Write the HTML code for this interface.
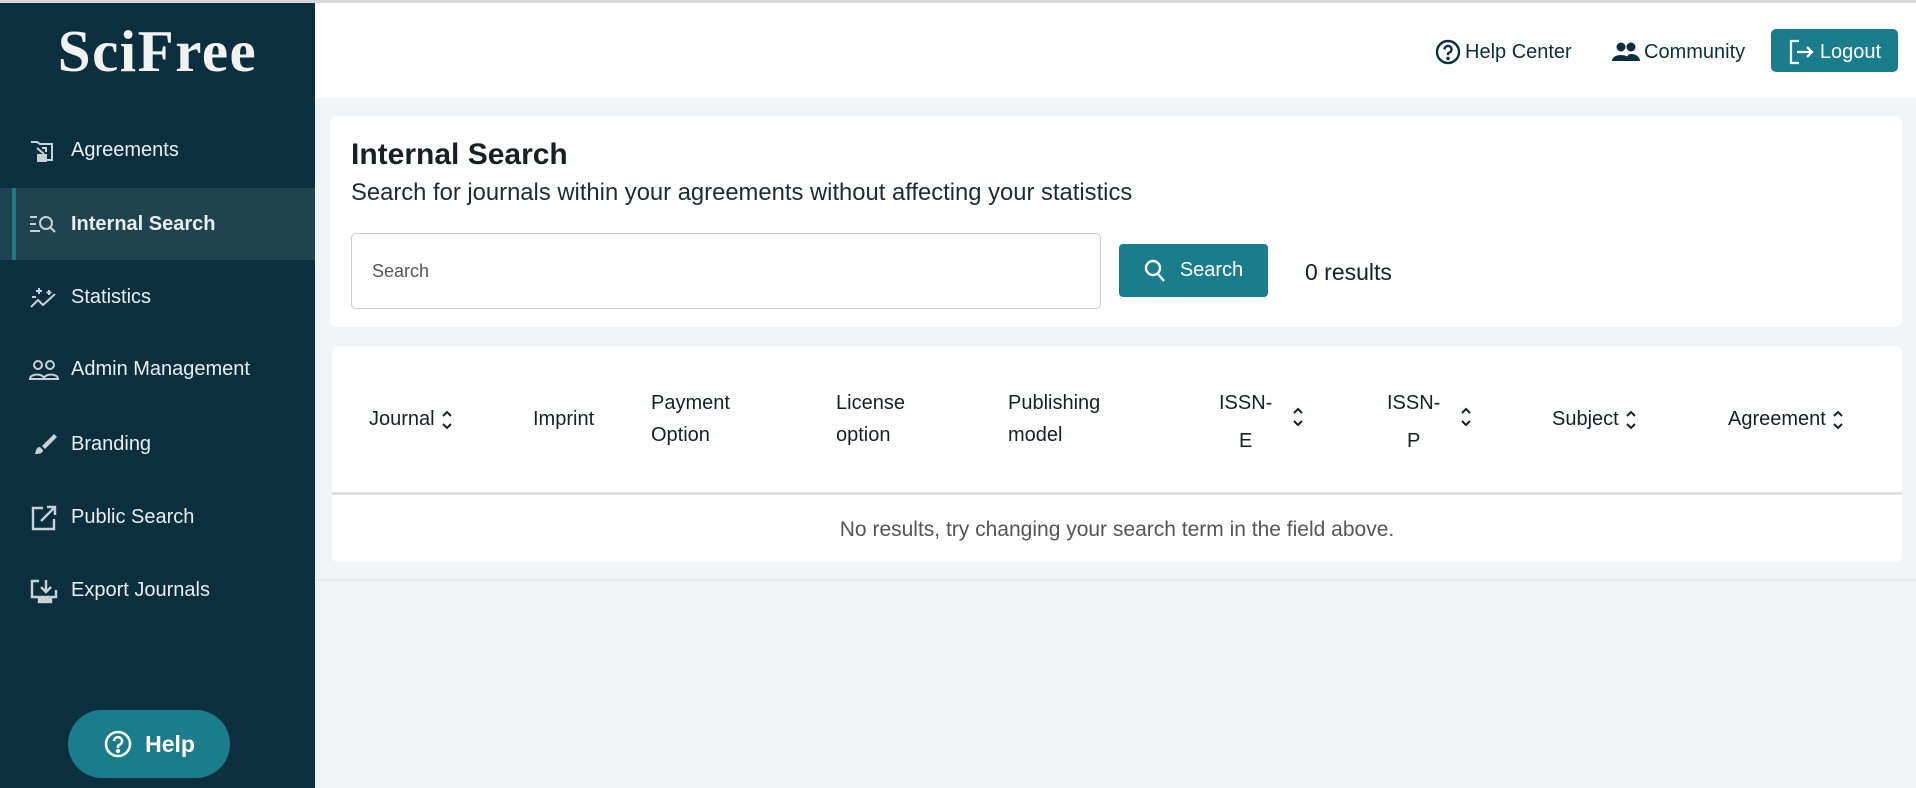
<!DOCTYPE html>
<html><head><meta charset="utf-8"><style>
*{margin:0;padding:0;box-sizing:border-box}
body{width:1916px;height:788px;overflow:hidden;background:#f1f4f7;font-family:"Liberation Sans",Arial,sans-serif;position:relative;color:#1a1f24}
.topline{position:absolute;left:0;top:0;width:1916px;height:3px;background:#d6d6d6;z-index:5}
.side{position:absolute;left:0;top:0;width:315px;height:788px;background:#0b2f3e}
.logo{position:absolute;left:0;width:315px;top:17px;text-align:center;font-family:"Liberation Serif",serif;font-weight:bold;font-size:59px;color:#f2f2f2;letter-spacing:1.5px}
.nav{position:absolute;left:0;width:315px;height:61px;display:flex;align-items:center;color:#e9eef0;font-size:20px}
.nav svg{position:absolute;left:29px;width:30px;height:26px}
.nav span{position:absolute;left:71px}
.active{background:#1f4350}
.active:before{content:"";position:absolute;left:12px;top:0;width:4px;height:100%;background:#1b7d8c}
.active span{font-weight:bold}
.help{position:absolute;left:68px;top:710px;width:162px;height:68px;border-radius:34px;background:#1b7d8c;color:#fff;font-weight:bold;font-size:23px;display:flex;align-items:center;justify-content:center;gap:12px}
.header{position:absolute;left:315px;top:0;width:1601px;height:98px;background:#fff}
.hl{position:absolute;top:37px;height:28px;font-size:20px;color:#0b2f3e;display:flex;align-items:center;gap:4px}
.logout{position:absolute;top:29px;width:127px;height:43px;background:#1b7d8c;border-radius:5px;color:#fff;font-size:20px;display:flex;align-items:center;justify-content:center;gap:6px;padding-top:3px}
.card{position:absolute;background:#fff;border-radius:6px}
h1{position:absolute;left:21px;top:22px;font-size:30px;font-weight:bold;color:#1a1f24}
.sub{position:absolute;left:21px;top:63px;font-size:23.8px;color:#1f2b33}
.inp{position:absolute;left:21px;top:117px;width:750px;height:76px;border:1px solid #c9cdd1;border-radius:5px;font-size:18px;color:#555;padding-left:20px;line-height:74px}
.sbtn{position:absolute;left:789px;top:128px;width:149px;height:53px;background:#1b7d8c;border-radius:4px;color:#fff;font-size:20px;display:flex;align-items:center;justify-content:center;gap:14px}
.res{position:absolute;left:975px;top:143px;font-size:23px;color:#1a1f24}
.th{position:absolute;font-size:20px;color:#1a1f24;line-height:32px}
.ch{display:inline-block;vertical-align:middle;margin-left:6px}
</style></head><body>
<div class="topline"></div>
<div class="side">
<div class="logo">SciFree</div>
<div class="nav" style="top:120px"><svg viewBox="0 0 30 26" fill="none" stroke="#c9d1d4" stroke-width="2"><path d="M2 4h6l3 2h12v16H10"/><path d="M8 10l7 6M13 10h4v4"/><rect x="9" y="17" width="8" height="6" fill="#c9d1d4"/></svg><span>Agreements</span></div>
<div class="nav active" style="top:188px;height:72px"><svg viewBox="0 0 30 26" fill="none" stroke="#c9d1d4" stroke-width="2"><path d="M1 6h7M1 13h6M1 20h10"/><circle cx="17" cy="12" r="6"/><path d="M21 16l5 5"/></svg><span>Internal Search</span></div>
<div class="nav" style="top:267px"><svg viewBox="0 0 30 26" fill="none" stroke="#c9d1d4" stroke-width="2"><path d="M2 22l7-7 5 5 12-11"/><path d="M10 3v6M7 6h6M20 5v5M17.5 7.5h5M3 12h4" /></svg><span>Statistics</span></div>
<div class="nav" style="top:339px"><svg viewBox="0 0 30 26" fill="none" stroke="#c9d1d4" stroke-width="2"><circle cx="9" cy="8" r="4"/><circle cx="21" cy="8" r="4"/><path d="M1 22c0-6 14-6 14 0zM15 22c0-6 14-6 14 0z"/></svg><span>Admin Management</span></div>
<div class="nav" style="top:414px"><svg viewBox="0 0 30 26" fill="#c9d1d4"><path d="M25 2l3 3-12 12-3-3z"/><path d="M11 15c-4 0-4 4-5 7 3 0 8 0 8-4z"/></svg><span>Branding</span></div>
<div class="nav" style="top:487px"><svg viewBox="0 0 30 26" fill="none" stroke="#c9d1d4" stroke-width="2.4"><path d="M14 3H4v21h21V14"/><path d="M12 16L26 2M18 2h8v8"/></svg><span>Public Search</span></div>
<div class="nav" style="top:560px"><svg viewBox="0 0 30 26" fill="none" stroke="#c9d1d4" stroke-width="2.4"><path d="M10 3H3v16h24V12"/><path d="M17 2v11M12 9l5 5 5-5"/><rect x="10" y="20" width="12" height="4" fill="#c9d1d4"/></svg><span>Export Journals</span></div>
<div class="help"><svg width="30" height="30" viewBox="0 0 30 30" fill="none" stroke="#fff" stroke-width="2.6"><circle cx="15" cy="15" r="12"/><path d="M11 12a4 4 0 1 1 5 4c-1 .5-1 1-1 3"/><circle cx="15" cy="22" r=".8" fill="#fff"/></svg>Help</div>
</div>
<div class="header">
<div class="hl" style="left:1120px;top:38px"><svg width="26" height="26" viewBox="0 0 26 26" fill="none" stroke="#0b2f3e" stroke-width="2.4"><circle cx="13" cy="13" r="11"/><path d="M9.5 10.5a3.5 3.5 0 1 1 4.5 3.3c-1 .4-1 1-1 2.5"/><circle cx="13" cy="19.5" r=".6" fill="#0b2f3e"/></svg>Help Center</div>
<div class="hl" style="left:1297px;top:38px"><svg width="28" height="22" viewBox="0 0 28 22" fill="#0b2f3e"><circle cx="9" cy="6" r="4.5"/><circle cx="19" cy="6" r="4.5"/><path d="M0 20c0-8 18-8 18 0zM14 20c0-4 2-7 5-7 5 0 9 3 9 7z"/></svg>Community</div>
<div class="logout" style="left:1456px"><svg width="26" height="26" viewBox="0 0 26 26" fill="none" stroke="#fff" stroke-width="2.2"><path d="M11 2H3v22h8"/><path d="M9 13h15M19 8l5 5-5 5"/></svg>Logout</div>
</div>
<div class="card" style="left:330px;top:116px;width:1572px;height:211px">
<h1>Internal Search</h1>
<div class="sub">Search for journals within your agreements without affecting your statistics</div>
<div class="inp">Search</div>
<div class="sbtn"><svg width="22" height="24" viewBox="0 0 22 24" fill="none" stroke="#fff" stroke-width="2.4"><circle cx="9" cy="9" r="7"/><path d="M14 15l6 7"/></svg>Search</div>
<div class="res">0 results</div>
</div>
<div class="card" style="left:332px;top:346px;width:1570px;height:216px">
<div style="position:absolute;left:0;top:146px;width:1570px;height:3px;background:#e0e0e0"></div>
<div class="th" style="left:37px;top:57px">Journal<svg class="ch" width="12" height="22" viewBox="0 0 12 22" fill="none" stroke="#1a1f24" stroke-width="2"><path d="M2 7l4-4 4 4M2 15l4 4 4-4"/></svg></div>
<div class="th" style="left:201px;top:57px">Imprint</div>
<div class="th" style="left:319px;top:41px">Payment<br>Option</div>
<div class="th" style="left:504px;top:41px">License<br>option</div>
<div class="th" style="left:676px;top:41px">Publishing<br>model</div>
<div class="th" style="left:887px;top:38px;text-align:center;line-height:38px">ISSN-<br>E</div>
<svg style="position:absolute;left:960px;top:60px" width="12" height="22" viewBox="0 0 12 22" fill="none" stroke="#1a1f24" stroke-width="2"><path d="M2 7l4-4 4 4M2 15l4 4 4-4"/></svg>
<div class="th" style="left:1055px;top:38px;text-align:center;line-height:38px">ISSN-<br>P</div>
<svg style="position:absolute;left:1128px;top:60px" width="12" height="22" viewBox="0 0 12 22" fill="none" stroke="#1a1f24" stroke-width="2"><path d="M2 7l4-4 4 4M2 15l4 4 4-4"/></svg>
<div class="th" style="left:1220px;top:57px">Subject<svg class="ch" width="12" height="22" viewBox="0 0 12 22" fill="none" stroke="#1a1f24" stroke-width="2"><path d="M2 7l4-4 4 4M2 15l4 4 4-4"/></svg></div>
<div class="th" style="left:1396px;top:57px">Agreement<svg class="ch" width="12" height="22" viewBox="0 0 12 22" fill="none" stroke="#1a1f24" stroke-width="2"><path d="M2 7l4-4 4 4M2 15l4 4 4-4"/></svg></div>
<div style="position:absolute;left:0;width:1570px;top:172px;text-align:center;font-size:21px;color:#555">No results, try changing your search term in the field above.</div>
</div>
<div style="position:absolute;left:315px;top:579px;width:1601px;height:2px;background:#e6eaee"></div>
</body></html>
